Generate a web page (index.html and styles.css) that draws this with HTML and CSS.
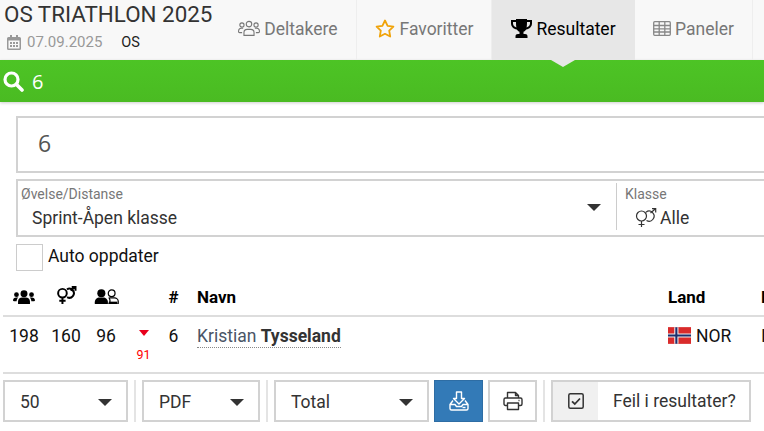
FILE: index.html
```html
<!DOCTYPE html>
<html lang="no">
<head>
<meta charset="utf-8">
<title>OS TRIATHLON 2025</title>
<link rel="stylesheet" href="styles.css">
</head>
<body>
<header class="top">
  <div class="event">
    <h1 class="event-title">OS TRIATHLON 2025</h1>
    <div class="event-meta">
      <svg class="ic-cal" viewBox="0 0 14 15"><path fill="#999" d="M3 0h2v2h4V0h2v2h1.500A1.500 1.500 0 0 1 14 3.500v10a1.500 1.500 0 0 1-1.500 1.500h-11A1.500 1.500 0 0 1 0 13.500v-10A1.500 1.500 0 0 1 1.500 2H3zM1.500 5.500v8h11v-8z"/><path fill="#999" d="M3 7h2v2H3zM6 7h2v2H6zM9 7h2v2H9zM3 10h2v2H3zM6 10h2v2H6zM9 10h2v2H9z"/></svg>
      <span class="event-date">07.09.2025</span>
      <span class="event-code">OS</span>
    </div>
  </div>
  <nav class="tabs">
    <a class="tab tab-deltakere">
      <svg class="ic-users" viewBox="0 0 24 18" fill="none" stroke="#777" stroke-width="1.200"><circle cx="12" cy="4.200" r="3"/><circle cx="4.300" cy="5.200" r="2.300"/><circle cx="19.700" cy="5.200" r="2.300"/><path d="M6.500 16.500v-3c0-2 1.500-3.500 3.500-3.500h4c2 0 3.500 1.500 3.500 3.500v3z"/><path d="M4.500 13.500H1.800A1.200 1.200 0 0 1 .6 12.300c0-2 1-3.500 3-3.500h2M19.500 13.500h2.700a1.200 1.200 0 0 0 1.200-1.200c0-2-1-3.500-3-3.500h-2"/></svg>
      <span>Deltakere</span>
    </a>
    <a class="tab tab-favoritter">
      <svg class="ic-star" viewBox="0 0 20 19"><path fill="none" stroke="#f0a30a" stroke-width="1.800" stroke-linejoin="round" d="M10 1.500l2.600 5.300 5.800.8-4.200 4.100 1 5.800L10 14.800l-5.200 2.700 1-5.800L1.600 7.600l5.800-.8z"/></svg>
      <span>Favoritter</span>
    </a>
    <a class="tab tab-resultater">
      <svg class="ic-trophy" viewBox="0 0 21 19"><path fill="#000" d="M5 0h11v1h5v3.500c0 3-2.500 5.500-5.800 6-.8 1.200-1.800 2-2.700 2.300V15h1.500c1.500 0 2.500.8 2.500 2.200V19H4.500v-1.800C4.500 15.800 5.500 15 7 15h1.500v-2.200c-.9-.3-1.900-1.100-2.700-2.300C2.500 10 0 7.500 0 4.500V1h5zM2 3v1.500c0 1.800 1.400 3.300 3.400 3.900C5.100 7 5 5 5 3zm17 0h-3c0 2-.1 4-.4 5.400 2-.6 3.400-2.100 3.400-3.900z"/></svg>
      <span>Resultater</span>
    </a>
    <a class="tab tab-paneler">
      <svg class="ic-table" viewBox="0 0 18 15" fill="none" stroke="#888" stroke-width="1.300"><rect x=".7" y=".7" width="16.600" height="13.600" rx="1"/><path d="M.7 4.500h16.600M.7 7.800h16.600M.7 11h16.600M6.200 .7v13.600M11.800 .7v13.600"/></svg>
      <span>Paneler</span>
    </a>
  </nav>
</header>
<div class="searchbar">
  <svg class="ic-search" viewBox="0 0 21 21"><circle cx="8.500" cy="8.500" r="6.500" fill="none" stroke="#fff" stroke-width="3.200"/><path d="M13.500 13.500l5.500 5.500" stroke="#fff" stroke-width="3.600" stroke-linecap="round"/></svg>
  <span class="searchbar-text">6</span>
</div>
<main class="content">
  <div class="filters">
    <div class="query">6</div>
    <div class="pickers">
      <div class="picker picker-distance">
        <div class="picker-label">Øvelse/Distanse</div>
        <div class="picker-value">Sprint-Åpen klasse</div>
        <span class="caret caret-distance"></span>
      </div>
      <div class="picker picker-class">
        <div class="picker-label">Klasse</div>
        <div class="picker-value">
          <svg class="ic-gender" viewBox="0 0 22 20" fill="none" stroke="#333" stroke-width="1.200"><circle cx="6.500" cy="8" r="5"/><path d="M6.500 13v6M3.500 16.500h6M11 4.200a5 5 0 1 1 .5 8.300M15.500 5L20.500 .8M17 .7h3.700v3.700"/></svg>
          <span>Alle</span>
        </div>
      </div>
    </div>
    <label class="auto"><span class="checkbox"></span><span>Auto oppdater</span></label>
  </div>
  <div class="results">
    <div class="rows rows-head">
      <div class="c c-mid"><svg class="ic-h1" viewBox="0 0 24 15"><circle cx="12" cy="4" r="3.800"/><circle cx="3.800" cy="5" r="2.600"/><circle cx="20.200" cy="5" r="2.600"/><path d="M5.500 15v-2.500C5.500 9.500 7.500 8 10 8h4c2.500 0 4.500 1.500 4.500 4.500V15zM0 11.500C0 9.200 1.500 8 3.500 8h2.300C4.600 9 4 10.500 4 12H1zM24 11.500C24 9.200 22.500 8 20.500 8h-2.300C19.400 9 20 10.500 20 12h3z"/></svg></div>
      <div class="c c-mid"><svg class="ic-h2" viewBox="0 0 22 20" fill="none" stroke="#000" stroke-width="2.200"><circle cx="6.500" cy="8" r="4.800"/><path d="M6.500 12.800V20M3 16.500h7M11.500 3.800a5 5 0 1 1 .2 8.600M15.500 5l5-4M16.800 1h4.200v4.200"/></svg></div>
      <div class="c c-mid"><svg class="ic-h3" viewBox="0 0 25 16"><circle cx="7" cy="4.500" r="4.300"/><path d="M0 16v-2c0-3 2.500-5 5-5h4c2.500 0 5 2 5 5v2z"/><circle cx="18" cy="4.500" r="3.600" fill="none" stroke="#000" stroke-width="1.300"/><path d="M15 16h9.300a.7.700 0 0 0 .7-.7V13c0-2-2-3.500-4-3.500h-5c-.3 0-.5 0-.7.100 .6 1 1 2.200 1 3.400z" fill="none" stroke="#000" stroke-width="1.300"/><path d="M15 13.500h9v2.500h-9z"/></svg></div>
      <div class="c"></div>
      <div class="c c-mid c-bold">#</div>
      <div class="c c-name c-bold">Navn</div>
      <div class="c c-left c-bold">Land</div>
      <div class="c c-left c-bold">Klubb</div>
    </div>
    <div class="rows rows-body">
      <div class="c c-mid">198</div>
      <div class="c c-mid">160</div>
      <div class="c c-mid">96</div>
      <div class="c c-mid c-move"><span class="tri"></span><span class="move-num">91</span></div>
      <div class="c c-mid">6</div>
      <div class="c c-name"><a class="athlete">Kristian <b>Tysseland</b></a></div>
      <div class="c c-left c-country">
        <svg class="flag" viewBox="0 0 22 16"><rect width="22" height="16" fill="#d92b2b"/><path d="M6 0h4v16H6zM0 6h22v4H0z" fill="#f0f0f0"/><path d="M7 0h2v16H7zM0 7h22v2H0z" fill="#1c2f6e"/></svg>
        <span>NOR</span>
      </div>
      <div class="c c-left">I</div>
    </div>
  </div>
  <div class="toolbar">
    <div class="sel sel-size"><span>50</span><span class="caret"></span></div>
    <span class="vsep"></span>
    <div class="sel sel-format"><span>PDF</span><span class="caret"></span></div>
    <span class="vsep"></span>
    <div class="sel sel-scope"><span>Total</span><span class="caret"></span></div>
    <button class="btn btn-primary">
      <svg class="ic-tool" viewBox="0 0 20 20" fill="none" stroke="#fff" stroke-width="1.400" stroke-linejoin="round"><path d="M7.500 1h5v6.500h3L10 13 4.500 7.500h3z"/><path d="M4 9.500l-3 4v4A1.500 1.500 0 0 0 2.500 19h15a1.500 1.500 0 0 0 1.500-1.500v-4l-3-4M1 13.500h5l1.500 2h5l1.500-2h5"/><path d="M13.500 16.500h3"/></svg>
    </button>
    <button class="btn btn-plain">
      <svg class="ic-tool" viewBox="0 0 20 20" fill="none" stroke="#333" stroke-width="1.400" stroke-linejoin="round"><path d="M4.500 7V1.500h8l3 3V7M12.500 1.500v3h3"/><rect x="1" y="7" width="18" height="7.500" rx="1.500"/><path d="M4.500 12h11v6.500h-11z" fill="#fff"/><path d="M15.500 9.500h1"/></svg>
    </button>
    <span class="vsep"></span>
    <button class="feil">
      <span class="feil-icon"><svg class="ic-check" viewBox="0 0 16 16" fill="none" stroke="#333" stroke-width="1.500"><rect x=".8" y=".8" width="14.400" height="14.400" rx="1.500"/><path d="M4 8.300l2.800 2.700L12 5.500" stroke-width="1.800"/></svg></span>
      <span class="feil-text">Feil i resultater?</span>
    </button>
  </div>
</main>
</body>
</html>
```

FILE: styles.css
```css
* { box-sizing: border-box; }
html, body { margin: 0; padding: 0; height: 431px; overflow: hidden; }
body { width: 764px; background: #fff; font-family: Roboto, "Liberation Sans", sans-serif; color: #000; }

.top { display: flex; height: 60px; background: #f8f8f8; }
.event { width: 223px; flex: none; padding-left: 4px; }
.event-title { margin: 0; font-size: 22.400px; font-weight: 400; line-height: 28px; color: #333; white-space: nowrap; }
.event-meta { display: flex; align-items: center; height: 20px; margin-top: 4px; font-size: 15px; }
.ic-cal { width: 14px; height: 15px; margin-left: 3px; }
.event-date { margin-left: 6px; color: #999; }
.event-code { margin-left: 19px; font-size: 14.500px; color: #222; }

.tabs { display: flex; }
.tab { display: flex; align-items: center; justify-content: center; gap: 4px; height: 60px; font-size: 17.500px; color: #777; border-right: 1px solid #eee; padding-bottom: 3px; }
.tab-deltakere { width: 134px; padding-right: 3px; }
.tab-favoritter { width: 135px; gap: 5px; }
.tab-resultater { width: 143px; background: #e7e7e7; color: #000; border-right: 0; position: relative; }
.tab-resultater::after { content: ""; position: absolute; left: 59px; bottom: -7px; border-left: 12px solid transparent; border-right: 12px solid transparent; border-top: 7px solid #e7e7e7; z-index: 2; }
.tab-paneler { width: 118px; }
.ic-users { width: 22px; height: 17px; }
.ic-star { width: 20px; height: 19px; }
.ic-trophy { width: 21px; height: 19px; }
.ic-table { width: 18px; height: 15px; }

.searchbar { display: flex; align-items: center; height: 42px; padding-left: 3px; background: linear-gradient(#4dc425, #4abb22); box-shadow: 0 1px 3px rgba(0,0,0,.2); }
.ic-search { width: 21px; height: 21px; }
.searchbar-text { margin-left: 8px; font-family: "Open Sans", sans-serif; font-size: 20px; font-weight: 500; color: #fff; }

.content { width: 900px; }
.filters { padding: 14px 0 0 16px; }
.query { height: 57px; line-height: 51px; padding-left: 20px; border: 2px solid #d2d2d2; font-family: "Open Sans", sans-serif; font-size: 23px; color: #555; background: #fff; }
.pickers { display: flex; height: 58px; margin-top: 6px; border: 2px solid #d2d2d2; padding-top: 2px; padding-bottom: 5px; }
.picker { position: relative; padding-left: 3px; }
.picker-distance { width: 599px; border-right: 1px solid #ccc; }
.picker-class { padding-left: 8px; }
.picker-label { font-size: 14px; line-height: 20px; padding-top: 1px; height: 21px; color: #777; }
.picker-value { display: flex; align-items: center; font-size: 17.500px; line-height: 25px; padding-top: 2px; color: #333; padding-left: 11px; }
.picker-class .picker-value { padding-left: 10px; gap: 3px; }
.ic-gender { width: 22px; height: 20px; margin-top: -2px; }
.caret { display: block; width: 0; height: 0; border-left: 7px solid transparent; border-right: 7px solid transparent; border-top: 7px solid #333; }
.caret-distance { position: absolute; right: 15px; top: 21px; }
.auto { display: flex; align-items: flex-start; gap: 5px; margin-top: 7px; height: 27px; font-size: 17.500px; line-height: 25px; color: #111; }
.checkbox { width: 27px; height: 27px; border: 1px solid #ccc; }

.results { margin-top: 9px; margin-left: 3px; }
.rows { display: grid; grid-template-columns: 42px 42px 38px 37px 23px 479px 93px 120px; }
.rows-head { height: 37px; padding-bottom: 2px; align-items: center; border-bottom: 2px solid #ddd; font-size: 17.500px; }
.rows-body { height: 57px; border-bottom: 2px solid #ddd; font-size: 17.500px; padding-top: 8px; color: #111; }
.c-mid { display: flex; flex-direction: column; align-items: center; }
.c-left { padding-left: 4px; }
.c-name { padding-left: 12px; }
.c-bold { font-weight: 700; font-size: 17px; }
.rows-body .c { line-height: 22px; }
.ic-h1 { width: 22px; height: 14px; }
.ic-h2 { width: 21px; height: 18px; margin-top: -3px; }
.ic-h3 { width: 25px; height: 15px; }
.c-move { padding-top: 5px; }
.rows-body .c-move { line-height: 14px; }
.tri { width: 0; height: 0; border-left: 5px solid transparent; border-right: 5px solid transparent; border-top: 6px solid #e8001c; }
.move-num { margin-top: 12px; font-size: 12.500px; color: #f00; line-height: 14px; }
.athlete { color: #4a5566; border-bottom: 1px dotted #888; display: inline-block; line-height: 21px; }
.athlete b { font-weight: 700; color: #333; }
.c-country { display: flex; align-items: flex-start; gap: 5px; }
.flag { width: 23px; height: 17px; margin-top: 2px; }

.toolbar { display: flex; height: 42px; margin: 6px 0 0 3px; }
.sel { display: flex; align-items: center; justify-content: space-between; height: 42px; border: 2px solid #d2d2d2; padding: 2px 14px 0 15px; font-size: 17.500px; color: #333; background: #fff; }
.sel-size { width: 125px; }
.sel-format { width: 118px; }
.sel-scope { width: 155px; }
.vsep { flex: none; width: 2px; height: 42px; margin: 0 6px 0 6px; background: #e4e4e4; }
.btn { display: flex; align-items: center; justify-content: center; width: 49px; height: 42px; padding: 0; border: 1px solid #2e6da4; background: #337ab7; }
.btn-primary { margin-left: 5px; }
.btn-plain { margin-left: 5px; border: 2px solid #d2d2d2; background: #fff; }
.ic-tool { width: 20px; height: 20px; }
.feil { display: flex; width: 200px; height: 42px; padding: 0; border: 2px solid #d2d2d2; background: #fff; font: inherit; }
.feil-icon { display: flex; align-items: center; justify-content: center; width: 45px; height: 38px; background: #f0f0f0; }
.ic-check { width: 16px; height: 16px; }
.feil-text { padding-left: 15px; font-size: 17.500px; line-height: 38px; color: #333; white-space: nowrap; }
```
